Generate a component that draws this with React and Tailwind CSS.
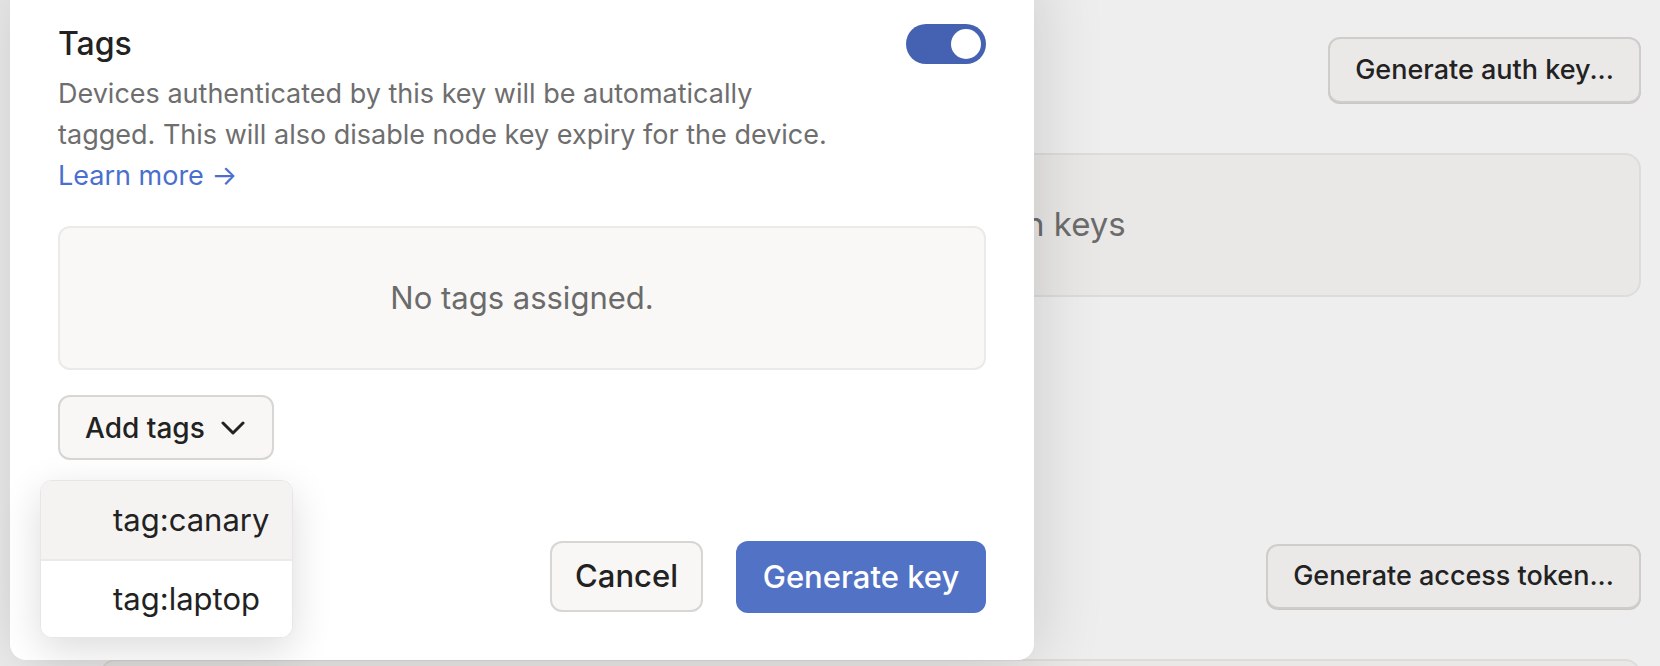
import { useState } from "react";

function Toggle({ on }) {
  return (
    <div
      className={`flex h-[40px] w-[80px] items-center rounded-full px-[5px] ${
        on ? "justify-end bg-[#4562b2]" : "justify-start bg-[#d6d3d1]"
      }`}
    >
      <span className="size-[30px] rounded-full bg-white" />
    </div>
  );
}

function Chevron() {
  return (
    <svg width="24" height="14" viewBox="0 0 24 14" fill="none">
      <path d="M2 2l10 10 10-10" stroke="#222" strokeWidth="3" strokeLinecap="round" strokeLinejoin="round" />
    </svg>
  );
}

// Page behind the modal
function KeysPage() {
  return (
    <div className="ml-[100px] mr-[19px] flex flex-col">
      <div className="flex justify-end pt-[37px]">
        <button className="h-[66px] rounded-xl border-2 border-[#cfccca] bg-[#eae9e8] px-[25px] text-[27px] font-medium text-[#222] shadow-[0_1px_0_#c9c6c4]">
          Generate auth key...
        </button>
      </div>
      <div className="mt-[50px] flex h-[144px] items-center justify-center rounded-2xl border-2 border-[#dedcdb] bg-[#e9e8e7] pl-[307px] text-[33px] text-[#6b6b6b]">
        No auth keys
      </div>

      <div className="mt-[247px] flex justify-end">
        <button className="h-[65px] rounded-xl border-2 border-[#cfccca] bg-[#eae9e8] px-[25px] text-[27px] font-medium text-[#222] shadow-[0_1px_0_#c9c6c4]">
          Generate access token...
        </button>
      </div>
      <div className="mt-[50px] h-[144px] rounded-2xl border-2 border-[#dedcdb] bg-[#e9e8e7]" />
    </div>
  );
}

function TagMenu({ tags, active }) {
  return (
    <div className="absolute left-[-18px] top-[85px] w-[253px] overflow-hidden rounded-xl border border-[#e6e6ea] bg-white shadow-[0_12px_40px_rgba(0,0,0,0.14)]">
      {tags.map((tag, i) => (
        <div
          key={tag}
          className={`flex h-[78px] items-center pl-[72px] text-[31px] text-[#222] ${
            i === active ? "bg-[#f4f3f2]" : "bg-white"
          } ${i > 0 ? "border-t-2 border-[#ebeae9]" : ""}`}
        >
          {tag}
        </div>
      ))}
    </div>
  );
}

function AuthKeyModal() {
  const [tagged] = useState(true);
  const tags = ["tag:canary", "tag:laptop"];

  return (
    <div className="absolute left-[10px] top-[-30px] w-[1024px] rounded-2xl bg-white px-[48px] pb-[47px] pt-[50px] shadow-[0_0_70px_rgba(0,0,0,0.16)]">
      <div className="flex items-center justify-between">
        <h2 className="text-[32px] font-medium text-[#222]">Tags</h2>
        <Toggle on={tagged} />
      </div>
      <p className="mt-[5px] max-w-[780px] text-[27px] leading-[41px] text-[#6e6e6e]">
        Devices authenticated by this key will be automatically tagged. This will also disable node key expiry for the
        device.
        <br />
        <a className="text-[#4a6fce]">Learn more →</a>
      </p>

      <div className="mt-[30px] flex h-[144px] items-center justify-center rounded-xl border-2 border-[#eceae8] bg-[#f9f8f7] text-[31px] text-[#6b6b6b]">
        No tags assigned.
      </div>

      <div className="relative mt-[25px]">
        <button className="flex h-[65px] w-[216px] items-center gap-[16px] rounded-xl border-2 border-[#d8d5d3] bg-[#f8f7f6] pl-[25px] text-[28px] font-medium text-[#222]">
          Add tags
          <Chevron />
        </button>
        <TagMenu tags={tags} active={0} />
      </div>

      <div className="mt-[81px] flex justify-end gap-[33px]">
        <button className="h-[71px] w-[153px] rounded-xl border-2 border-[#d8d5d3] bg-[#f8f7f6] text-[31px] font-medium text-[#222]">
          Cancel
        </button>
        <button className="h-[72px] w-[250px] rounded-xl bg-[#5272c5] text-[31px] font-medium text-white">
          Generate key
        </button>
      </div>
    </div>
  );
}

export default function App() {
  return (
    <div
      className="relative h-[666px] w-[1660px] overflow-hidden bg-[#eeeeee]"
      style={{ fontFamily: "Inter, 'Noto Sans', sans-serif" }}
    >
      <KeysPage />
      <AuthKeyModal />
    </div>
  );
}
